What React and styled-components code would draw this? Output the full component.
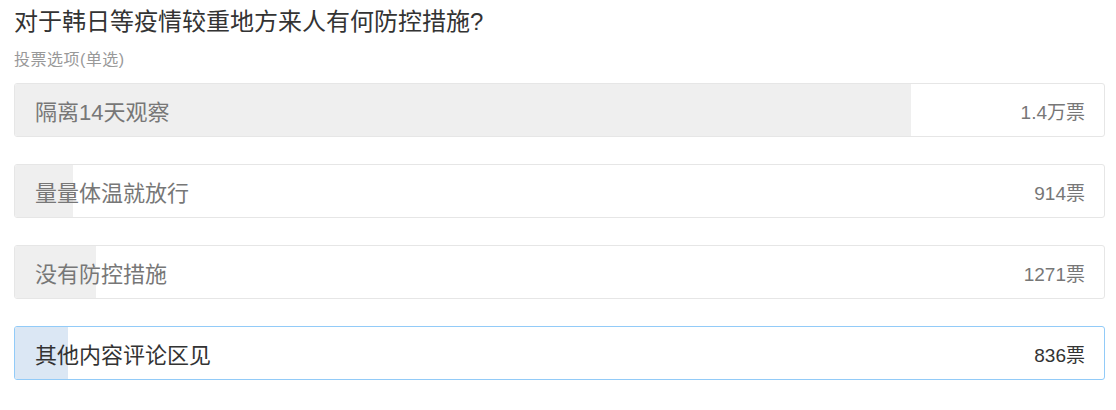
import React from 'react'
import styled, { createGlobalStyle } from 'styled-components'

const GlobalStyle = createGlobalStyle`
    body {
        margin: 0;
        background: #fff;
        font-family: "Liberation Sans", "Noto Sans CJK SC", sans-serif;
    }
`

const Poll = styled.div`
    padding: 6px 11px 0 14px;
`

const Title = styled.div`
    font-size: 24px;
    line-height: 32px;
    color: #333;
`

const Hint = styled.div`
    font-size: 16px;
    line-height: 20px;
    letter-spacing: 0.5px;
    color: #999;
    margin-top: 12px;
    margin-bottom: 13px;
`

const Options = styled.div`
    display: flex;
    flex-direction: column;
    gap: 27px;
`

const Option = styled.div`
    position: relative;
    height: 54px;
    box-sizing: border-box;
    border: 1px solid ${props => props.selected ? '#92cbf8' : '#e6e6e6'};
    border-radius: 3px;
    overflow: hidden;
    display: flex;
    align-items: center;
    justify-content: space-between;
    padding: 0 19px 0 20px;
    color: ${props => props.selected ? '#333' : '#777'};
`

const Fill = styled.div`
    position: absolute;
    left: 0;
    top: 0;
    bottom: 0;
    background: ${props => props.selected ? '#dbe7f4' : '#efefef'};
`

const Label = styled.span`
    position: relative;
    font-size: 22px;
`

const Votes = styled.span`
    position: relative;
    font-size: 19px;
`

const options = [
    { label: '隔离14天观察', votes: 14000, text: '1.4万票' },
    { label: '量量体温就放行', votes: 914, text: '914票' },
    { label: '没有防控措施', votes: 1271, text: '1271票' },
    { label: '其他内容评论区见', votes: 836, text: '836票', selected: true },
]

const total = options.reduce((sum, o) => sum + o.votes, 0)

export default function App() {
    return (
        <Poll>
            <GlobalStyle />
            <Title>对于韩日等疫情较重地方来人有何防控措施?</Title>
            <Hint>投票选项(单选)</Hint>
            <Options>
                {options.map(o => (
                    <Option key={o.label} selected={o.selected}>
                        <Fill selected={o.selected} style={{ width: (o.votes / total * 100) + '%' }} />
                        <Label>{o.label}</Label>
                        <Votes>{o.text}</Votes>
                    </Option>
                ))}
            </Options>
        </Poll>
    )
}
